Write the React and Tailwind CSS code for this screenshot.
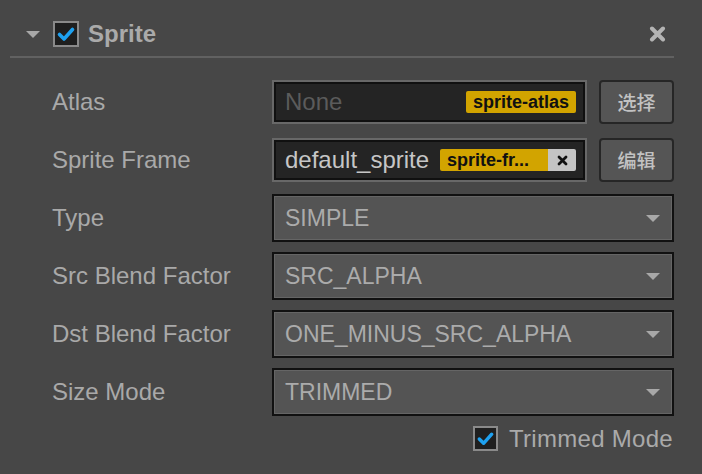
import React from "react";

const font = { fontFamily: '"Liberation Sans", Arial, "Noto Sans CJK SC", sans-serif' };

function Check({ size = 26 }) {
  return (
    <div
      className="flex shrink-0 items-center justify-center border-2 border-[#8a8a8a] bg-[#1f1f1f]"
      style={{ width: size, height: size }}
    >
      <svg width={size - 4} height={size - 4} viewBox="0 0 22 22">
        <polyline points="4.5,11.5 9,16 17.5,6.5" fill="none" stroke="#1ea1f0" strokeWidth="3.6" strokeLinecap="round" strokeLinejoin="round" />
      </svg>
    </div>
  );
}

function Caret() {
  return (
    <svg width="14" height="7" viewBox="0 0 14 7" className="shrink-0">
      <polygon points="0,0 14,0 7,7" fill="#a8a8a8" />
    </svg>
  );
}

function Row({ label, children }) {
  return (
    <div className="flex h-[58px] items-center">
      <div className="w-[272px] pl-[52px] text-[24px] text-[#a9a9a9]">{label}</div>
      <div className="flex w-[402px] items-center">{children}</div>
    </div>
  );
}

function Field({ children }) {
  return (
    <div className="h-[44px] w-[315px] border-2 border-[#686868]">
      <div className="flex h-full items-center border-2 border-[#101010] bg-[#242424] pl-[9px] pr-[7px]">{children}</div>
    </div>
  );
}

function SideButton({ children }) {
  return (
    <button className="ml-[12px] flex h-[44px] w-[75px] items-center justify-center rounded-[4px] border-2 border-[#262626] bg-[#555555] text-[19px] font-medium text-[#c2c2c2]" style={{ fontFamily: '"Noto Sans CJK SC", sans-serif' }}>
      {children}
    </button>
  );
}

function Select({ value }) {
  return (
    <div className="h-[48px] w-[402px] border-2 border-[#111]">
      <div className="flex h-full items-center justify-between border border-[#656565] bg-[#545454] pl-[10px] pr-[11px] text-[23px] text-[#ababab]">
        <span>{value}</span>
        <Caret />
      </div>
    </div>
  );
}

export default function App() {
  return (
    <div className="h-[474px] w-[702px] overflow-hidden bg-[#474747]" style={font}>
      <div className="flex h-[56px] items-center pt-[12px]">
        <div className="ml-[26px]">
          <Caret />
        </div>
        <div className="ml-[13px]">
          <Check size={26} />
        </div>
        <span className="ml-[9px] text-[24px] font-bold text-[#aaaaaa]">Sprite</span>
        <div className="ml-auto mr-[36px]">
          <svg width="17" height="16" viewBox="0 0 17 16">
            <path d="M3 2.5 L14 13.5 M14 2.5 L3 13.5" stroke="#b4b4b4" strokeWidth="4" strokeLinecap="round" />
          </svg>
        </div>
      </div>
      <div className="ml-[10px] h-[2px] w-[664px] bg-[#616161]" />

      <div className="mt-[15px]">
        <Row label="Atlas">
          <Field>
            <span className="text-[24px] text-[#5b5b5b]">None</span>
            <div className="ml-auto flex h-[22px] w-[110px] items-center justify-center rounded-[2px] bg-[#d2a400] text-[18px] font-bold leading-none text-[#111]">
              sprite-atlas
            </div>
          </Field>
          <SideButton>选择</SideButton>
        </Row>
        <Row label="Sprite Frame">
          <Field>
            <span className="text-[24px] text-[#c6c6c6]">default_sprite</span>
            <div className="ml-auto flex">
              <div className="flex h-[22px] w-[108px] items-center rounded-l-[2px] bg-[#d2a400] pl-[7px] text-[18px] font-bold leading-none text-[#111]">
                sprite-fr...
              </div>
              <div className="flex h-[22px] w-[28px] items-center justify-center rounded-r-[2px] bg-[#c4c4c4]">
                <svg width="11" height="11" viewBox="0 0 11 11">
                  <path d="M2 2 L9 9 M9 2 L2 9" stroke="#111" strokeWidth="2.8" strokeLinecap="round" />
                </svg>
              </div>
            </div>
          </Field>
          <SideButton>编辑</SideButton>
        </Row>
        <Row label="Type">
          <Select value="SIMPLE" />
        </Row>
        <Row label="Src Blend Factor">
          <Select value="SRC_ALPHA" />
        </Row>
        <Row label="Dst Blend Factor">
          <Select value="ONE_MINUS_SRC_ALPHA" />
        </Row>
        <Row label="Size Mode">
          <Select value="TRIMMED" />
        </Row>
        <div className="flex h-[35px] items-center justify-end pr-[29px]">
          <Check size={25} />
          <span className="ml-[11px] text-[24px] tracking-[0.3px] text-[#aaaaaa]">Trimmed Mode</span>
        </div>
      </div>
    </div>
  );
}
